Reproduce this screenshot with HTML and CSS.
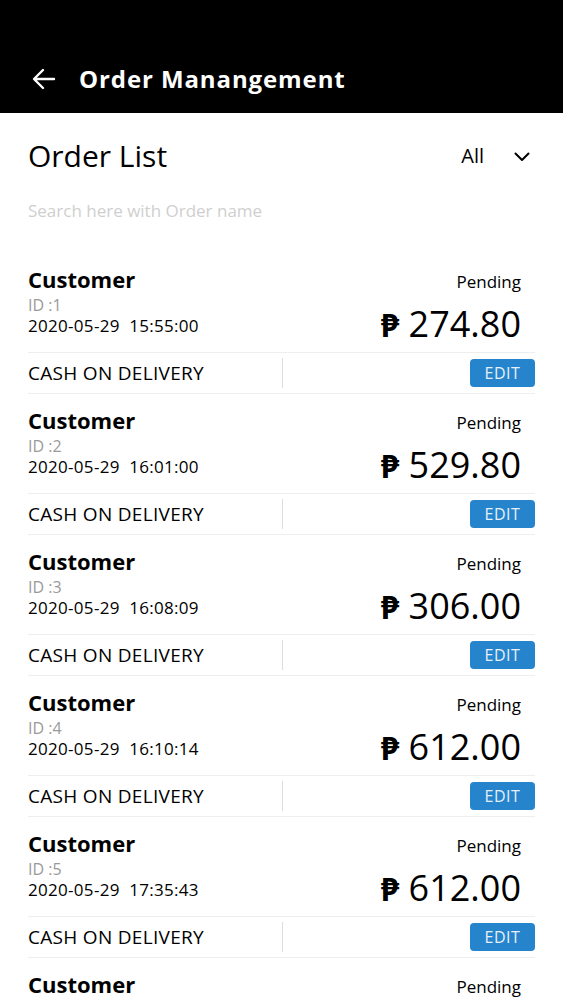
FILE: index.html
```html
<!DOCTYPE html>
<html>
<head>
    <meta charset="utf-8">
    <title>Order Manangement</title>
    <link rel="stylesheet" href="styles.css">
</head>
<body>
<div class="topbar">
    <svg class="back" width="24" height="22" viewBox="0 0 24 22">
        <path d="M22 11H3M11 2L2 11l9 9" fill="none" stroke="#fff" stroke-width="2.4" stroke-linecap="round" stroke-linejoin="round"/>
    </svg>
    <span class="title">Order Manangement</span>
</div>

<div class="list-head">
    <h1>Order List</h1>
    <div class="filter">
        <span>All</span>
        <svg width="16" height="10" viewBox="0 0 16 10">
            <path d="M1.5 1.5L8 8l6.5-6.5" fill="none" stroke="#000" stroke-width="2" stroke-linecap="round" stroke-linejoin="round"/>
        </svg>
    </div>
</div>

<input class="search" type="text" placeholder="Search here with Order name">

<div class="orders">
    <div class="order">
        <div class="order-top">
            <div class="left">
                <div class="customer">Customer</div>
                <div class="oid">ID :1</div>
                <div class="date">2020-05-29&nbsp;&nbsp;15:55:00</div>
            </div>
            <div class="right">
                <div class="status">Pending</div>
                <div class="price"><span class="peso">₱</span> 274.80</div>
            </div>
        </div>
        <div class="order-foot">
            <span class="pay">CASH ON DELIVERY</span>
            <span class="sep"></span>
            <button class="edit">EDIT</button>
        </div>
    </div>
    <div class="order">
        <div class="order-top">
            <div class="left">
                <div class="customer">Customer</div>
                <div class="oid">ID :2</div>
                <div class="date">2020-05-29&nbsp;&nbsp;16:01:00</div>
            </div>
            <div class="right">
                <div class="status">Pending</div>
                <div class="price"><span class="peso">₱</span> 529.80</div>
            </div>
        </div>
        <div class="order-foot">
            <span class="pay">CASH ON DELIVERY</span>
            <span class="sep"></span>
            <button class="edit">EDIT</button>
        </div>
    </div>
    <div class="order">
        <div class="order-top">
            <div class="left">
                <div class="customer">Customer</div>
                <div class="oid">ID :3</div>
                <div class="date">2020-05-29&nbsp;&nbsp;16:08:09</div>
            </div>
            <div class="right">
                <div class="status">Pending</div>
                <div class="price"><span class="peso">₱</span> 306.00</div>
            </div>
        </div>
        <div class="order-foot">
            <span class="pay">CASH ON DELIVERY</span>
            <span class="sep"></span>
            <button class="edit">EDIT</button>
        </div>
    </div>
    <div class="order">
        <div class="order-top">
            <div class="left">
                <div class="customer">Customer</div>
                <div class="oid">ID :4</div>
                <div class="date">2020-05-29&nbsp;&nbsp;16:10:14</div>
            </div>
            <div class="right">
                <div class="status">Pending</div>
                <div class="price"><span class="peso">₱</span> 612.00</div>
            </div>
        </div>
        <div class="order-foot">
            <span class="pay">CASH ON DELIVERY</span>
            <span class="sep"></span>
            <button class="edit">EDIT</button>
        </div>
    </div>
    <div class="order">
        <div class="order-top">
            <div class="left">
                <div class="customer">Customer</div>
                <div class="oid">ID :5</div>
                <div class="date">2020-05-29&nbsp;&nbsp;17:35:43</div>
            </div>
            <div class="right">
                <div class="status">Pending</div>
                <div class="price"><span class="peso">₱</span> 612.00</div>
            </div>
        </div>
        <div class="order-foot">
            <span class="pay">CASH ON DELIVERY</span>
            <span class="sep"></span>
            <button class="edit">EDIT</button>
        </div>
    </div>
    <div class="order">
        <div class="order-top">
            <div class="left">
                <div class="customer">Customer</div>
                <div class="oid">ID :6</div>
                <div class="date">2020-05-29&nbsp;&nbsp;17:40:12</div>
            </div>
            <div class="right">
                <div class="status">Pending</div>
                <div class="price"><span class="peso">₱</span> 612.00</div>
            </div>
        </div>
        <div class="order-foot">
            <span class="pay">CASH ON DELIVERY</span>
            <span class="sep"></span>
            <button class="edit">EDIT</button>
        </div>
    </div>
</div>
</body>
</html>
```

FILE: styles.css
```css
body { margin: 0; background: #fff; font-family: "Open Sans", "Noto Sans", sans-serif; color: #000; overflow: hidden; }

.topbar { height: 113px; background: #000; display: flex; align-items: flex-end; padding: 0 0 19px 32px; box-sizing: border-box; }
.back { margin-right: 23px; margin-bottom: 4px; }
.title { color: #fff; font-size: 24px; font-weight: 700; line-height: 30px; letter-spacing: 0.9px; }

.list-head { display: flex; align-items: flex-start; justify-content: space-between; padding: 23px 33px 0 28px; }
.list-head h1 { margin: 0; font-size: 30px; font-weight: 400; line-height: 40px; }
.filter { display: flex; align-items: center; gap: 30px; font-size: 20px; line-height: 40px; }
.filter svg { margin-top: 2px; }

.search { display: block; margin: 22px 28px 0; padding: 0; border: none; outline: none; font-family: inherit; font-size: 17px; height: 24px; width: 400px; color: #000; }
.search::placeholder { color: #cfcfcf; }

.orders { margin-top: 44px; }
.order { margin: 0 28px 13px; }
.order-top { height: 86px; border-bottom: 1px solid #eeeeee; display: flex; justify-content: space-between; }
.customer { font-size: 22px; font-weight: 700; line-height: 26px; }
.oid { margin-top: 2px; font-size: 16px; color: #9a9a9a; line-height: 22px; }
.date { font-size: 17px; line-height: 24px; margin-top: -2px; letter-spacing: 0.3px; }
.right { text-align: right; padding-right: 14px; }
.status { padding-top: 3px; font-size: 17px; line-height: 26px; }
.price { margin-top: 9px; font-size: 36px; line-height: 40px; }
.peso { font-weight: 700; font-size: 32px; }

.order-foot { display: flex; align-items: center; height: 40px; border-bottom: 1px solid #eeeeee; }
.pay { font-size: 19px; width: 254px; letter-spacing: 0.3px; }
.sep { width: 1px; height: 30px; background: #dddddd; }
.edit { margin-left: auto; width: 65px; height: 28px; border: none; border-radius: 4px; background: #2584cb; color: #e6f0fa; font-family: inherit; font-size: 16px; padding: 0; letter-spacing: 0.5px; }
```
